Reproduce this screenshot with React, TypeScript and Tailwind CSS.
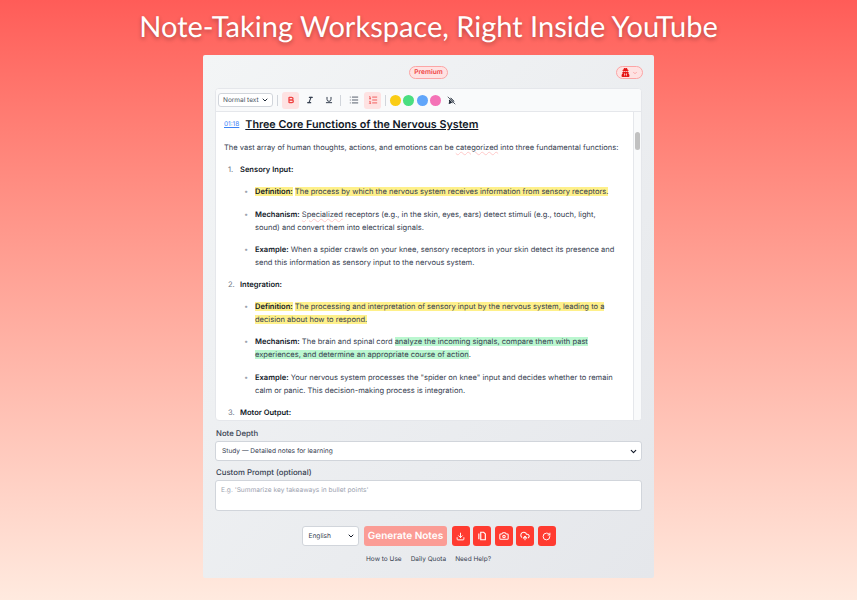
import React from 'react';
import {
  Bold,
  ChevronDown,
  Camera,
  CloudUpload,
  Download,
  Italic,
  List,
  ListOrdered,
  RotateCw,
  Underline,
} from 'lucide-react';
import { FaUserSecret } from 'react-icons/fa';

const Yellow = ({ children }: { children: React.ReactNode }) => (
  <span className="bg-[#fef08a]">{children}</span>
);

const Green = ({ children }: { children: React.ReactNode }) => (
  <span className="bg-[#bbf7d0]">{children}</span>
);

const Typo = ({ children }: { children: React.ReactNode }) => (
  <span className="underline decoration-wavy decoration-red-200 decoration-[0.5px]">{children}</span>
);

function Bullet({ label, children }: { label: React.ReactNode; children: React.ReactNode }) {
  return (
    <div className="flex mt-[9.2px]">
      <span className="w-[31px] pl-[20px] shrink-0 text-[#9ca3af]">•</span>
      <p>
        {label} {children}
      </p>
    </div>
  );
}

const B = ({ children }: { children: React.ReactNode }) => (
  <b className="font-semibold text-[#111827]">{children}</b>
);

function Num({ n, title }: { n: number; title: string }) {
  return (
    <div className="flex mt-[9.2px]">
      <span className="w-[16px] pl-[4px] shrink-0 text-[#6b7280]">{n}.</span>
      <b className="font-semibold text-[#111827]">{title}</b>
    </div>
  );
}

function ToolBtn({ active, children }: { active?: boolean; children: React.ReactNode }) {
  return (
    <div
      className={`w-[17px] h-[17px] rounded-[3px] flex items-center justify-center ${
        active ? 'bg-[#fee2e2] text-[#ef4444]' : 'text-[#374151]'
      }`}
    >
      {children}
    </div>
  );
}

function RedBtn({ children }: { children: React.ReactNode }) {
  return (
    <div className="w-[18px] h-[20px] rounded-[3px] bg-[#ff3b30] text-white flex items-center justify-center">
      {children}
    </div>
  );
}

export default function App() {
  return (
    <div className="w-[857px] h-[600px] overflow-hidden flex flex-col items-center bg-gradient-to-b from-[#ff5c58] to-[#ffeadf] font-['Inter',sans-serif] [text-rendering:geometricPrecision]">
      <h1 className="h-[55px] pt-[7px] text-[29px] leading-[40px] font-normal text-white font-['Lato',sans-serif] [text-shadow:0_2px_4px_rgba(0,0,0,0.3)] whitespace-nowrap">
        Note-Taking Workspace, Right Inside YouTube
      </h1>

      <div className="w-[451px] h-[523px] rounded-[2px] bg-gradient-to-br from-[#f3f5f6] to-[#e5e7eb] px-[12px] pt-[11px] text-[7.8px] leading-[13px]">
        <div className="relative h-[22px] flex justify-center items-start">
          <span className="h-[13px] px-[4px] rounded-full bg-[#fee2e2] border border-[#fca5a5] text-[#ef4444] font-semibold text-[6.6px] leading-[11px]">
            Premium
          </span>
          <div className="absolute right-[-1px] top-0 w-[27px] h-[13px] rounded-full bg-[#fee2e2] border border-[#fca5a5] flex items-center justify-center gap-[2px]">
            <FaUserSecret size={9} className="text-[#e51515]" />
            <ChevronDown size={6} className="text-[#f87171]" />
          </div>
        </div>

        <div className="h-[333px] rounded-[4px] border border-[#e5e7eb] bg-white overflow-hidden flex flex-col">
          <div className="h-[23px] shrink-0 bg-[#f9fafb] border-b border-[#e5e7eb] flex items-center pl-[2px]">
            <div className="w-[55px] h-[14px] rounded-[3px] border border-[#d1d5db] bg-white flex items-center justify-between pl-[4px] pr-[3px] text-[6.5px] text-[#4b5563] whitespace-nowrap">
              Normal text
              <ChevronDown size={8} strokeWidth={3} className="text-[#1f2937]" />
            </div>
            <div className="w-px h-[11px] bg-[#d1d5db] ml-[4px] mr-[4px]" />
            <div className="flex gap-[2px]">
              <ToolBtn active><Bold size={8} strokeWidth={4} /></ToolBtn>
              <ToolBtn><Italic size={8} strokeWidth={3.5} /></ToolBtn>
              <ToolBtn><Underline size={8} strokeWidth={3} /></ToolBtn>
            </div>
            <div className="w-px h-[11px] bg-[#d1d5db] ml-[3px] mr-[4px]" />
            <div className="flex gap-[2px]">
              <ToolBtn><List size={10} /></ToolBtn>
              <ToolBtn active><ListOrdered size={10} /></ToolBtn>
            </div>
            <div className="w-px h-[11px] bg-[#d1d5db] ml-[4px] mr-[4px]" />
            <div className="flex items-center gap-[2.3px]">
              <span className="w-[11px] h-[11px] rounded-full bg-[#facc15]" />
              <span className="w-[11px] h-[11px] rounded-full bg-[#4ade80]" />
              <span className="w-[11px] h-[11px] rounded-full bg-[#60a5fa]" />
              <span className="w-[11px] h-[11px] rounded-full bg-[#f472b6]" />
            </div>
            <div className="ml-[2px]">
              <ToolBtn>
                <svg width="9" height="9" viewBox="0 0 12 12" className="text-[#1f2937]">
                  <path d="M5 2 L10 7 L7.5 9.5 L5.5 9 L4 10.5 L2 10 L3 8 L2.5 6 Z" fill="currentColor" />
                  <path d="M1 1 L11 11" stroke="#f9fafb" strokeWidth="2" />
                  <path d="M1 1 L11 11" stroke="currentColor" strokeWidth="1" />
                </svg>
              </ToolBtn>
            </div>
          </div>

          <div className="flex-1 flex min-h-0">
            <div className="flex-1 min-w-0 pl-[8px] pr-[12px] pt-[4px] overflow-hidden text-[#374151] text-[7.55px]">
              <div className="flex items-center gap-[6px] h-[17px]">
                <span className="text-[6.5px] text-[#3b82f6] underline">01:18</span>
                <span className="text-[10.75px] font-semibold text-[#111827] underline whitespace-nowrap">
                  Three Core Functions of the Nervous System
                </span>
              </div>
              <p className="mt-[8px]">
                The vast array of human thoughts, actions, and emotions can be <Typo>categorized</Typo> into three fundamental functions:
              </p>
              <Num n={1} title="Sensory Input:" />
              <Bullet label={<Yellow><B>Definition:</B></Yellow>}>
                <Yellow>The process by which the nervous system receives information from sensory receptors.</Yellow>
              </Bullet>
              <Bullet label={<B>Mechanism:</B>}>
                <Typo>Specialized</Typo> receptors (e.g., in the skin, eyes, ears) detect stimuli (e.g., touch, light, sound) and convert them into electrical signals.
              </Bullet>
              <Bullet label={<B>Example:</B>}>
                When a spider crawls on your knee, sensory receptors in your skin detect its presence and send this information as sensory input to the nervous system.
              </Bullet>
              <Num n={2} title="Integration:" />
              <Bullet label={<Yellow><B>Definition:</B></Yellow>}>
                <Yellow>The processing and interpretation of sensory input by the nervous system, leading to a decision about how to respond.</Yellow>
              </Bullet>
              <Bullet label={<B>Mechanism:</B>}>
                The brain and spinal cord <Green>analyze the incoming signals, compare them with past experiences, and determine an appropriate course of action</Green>.
              </Bullet>
              <Bullet label={<B>Example:</B>}>
                Your nervous system processes the "spider on knee" input and decides whether to remain calm or panic. This decision-making process is integration.
              </Bullet>
              <Num n={3} title="Motor Output:" />
            </div>
            <div className="w-[8px] shrink-0 bg-[#f9fafb] border-l border-[#e5e7eb]">
              <div className="w-[5px] h-[18px] mt-[20px] ml-[1px] rounded-full bg-[#c1c1c1]" />
            </div>
          </div>
        </div>

        <label className="block mt-[6px] pl-[1px] text-[#374151] font-medium">Note Depth</label>
        <div className="mt-[1px] h-[20px] rounded-[3px] border border-[#d1d5db] bg-white flex items-center justify-between pl-[6px] pr-[3px] text-[6.6px] text-[#374151]">
          Study — Detailed notes for learning
          <ChevronDown size={9} strokeWidth={3} className="text-[#111827]" />
        </div>
        <label className="block mt-[5px] pl-[1px] text-[#374151] font-medium">Custom Prompt (optional)</label>
        <div className="mt-[1px] h-[31px] rounded-[3px] border border-[#d1d5db] bg-white pl-[5px] pt-[3px] text-[6.6px] text-[#9ca3af]">
          E.g. 'Summarize key takeaways in bullet points'
        </div>

        <div className="mt-[15px] flex items-center justify-center gap-[3.5px]">
          <div className="w-[57px] h-[20px] mr-[2px] rounded-[3px] border border-[#d1d5db] bg-white flex items-center justify-between pl-[6px] pr-[3px] text-[6.6px] text-[#374151]">
            English
            <ChevronDown size={8} strokeWidth={3} className="text-[#111827]" />
          </div>
          <div className="w-[83px] h-[20px] mr-[1px] rounded-[3px] bg-[#fb9c95] text-white font-semibold text-[10px] flex items-center justify-center whitespace-nowrap">
            Generate Notes
          </div>
          <RedBtn><Download size={9} strokeWidth={2.5} /></RedBtn>
          <RedBtn>
            <svg width="10" height="10" viewBox="0 0 12 12" fill="none" stroke="currentColor" strokeWidth="1.4">
              <path d="M4.5 1.5 H8 L10 3.5 V10.5 H4.5 Z" />
              <path d="M2.2 3 V10" />
            </svg>
          </RedBtn>
          <RedBtn><Camera size={10} strokeWidth={2.5} /></RedBtn>
          <RedBtn><CloudUpload size={10} strokeWidth={2.5} /></RedBtn>
          <RedBtn><RotateCw size={9} strokeWidth={2.5} /></RedBtn>
        </div>
        <div className="mt-[7px] flex justify-center gap-[9px] text-[6.5px] text-[#374151]">
          <span>How to Use</span>
          <span>Daily Quota</span>
          <span>Need Help?</span>
        </div>
      </div>
    </div>
  );
}
